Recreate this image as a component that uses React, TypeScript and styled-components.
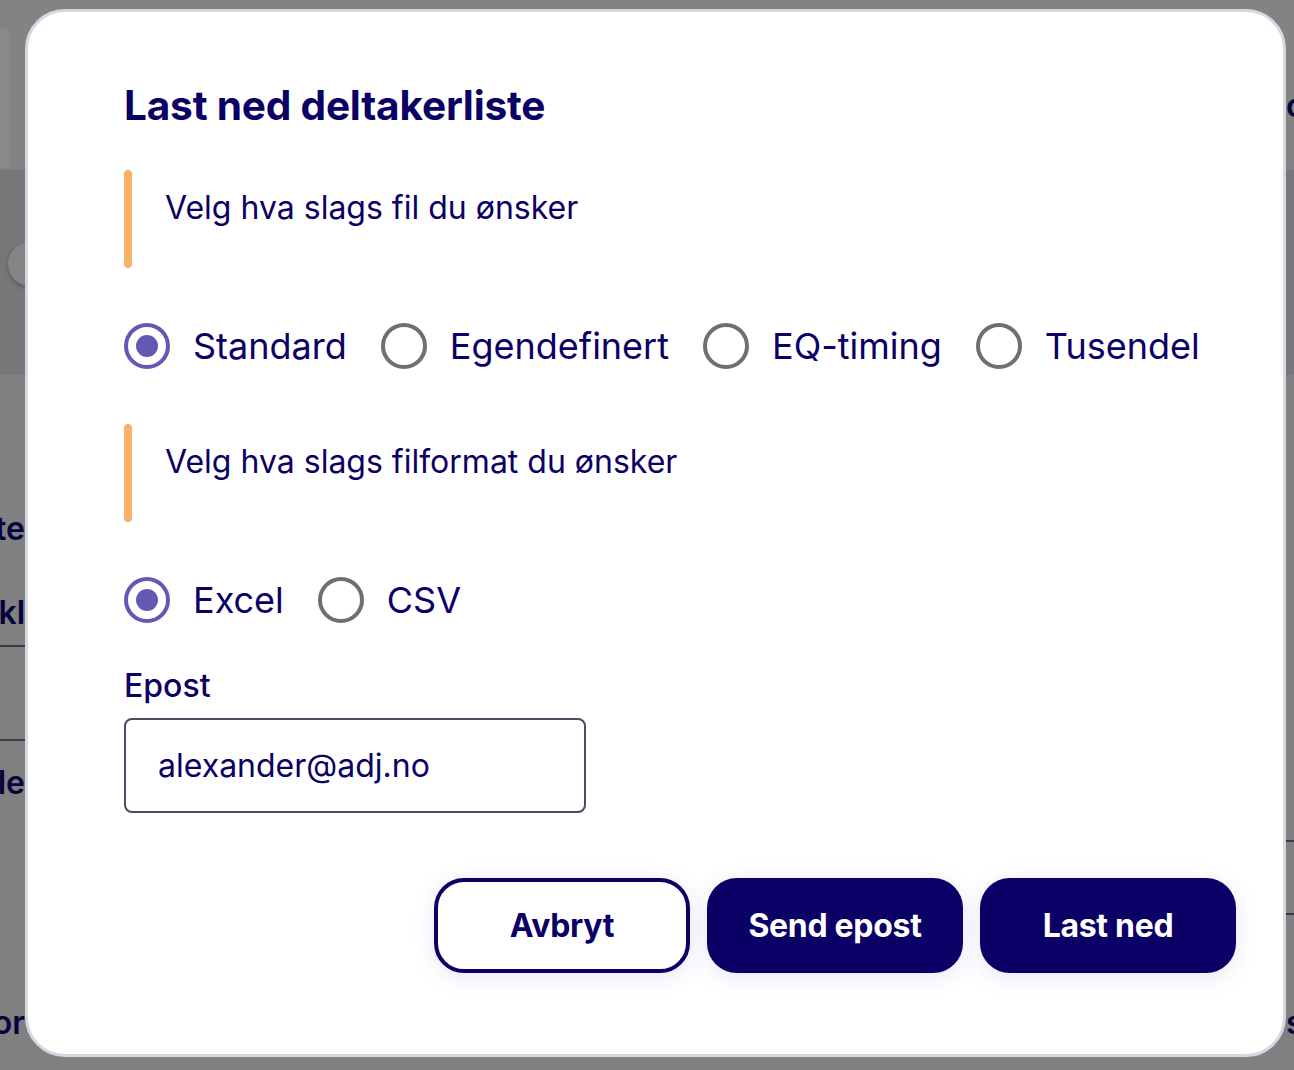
import React, { useState } from "react";
import styled, { createGlobalStyle } from "styled-components";

const GlobalStyle = createGlobalStyle`
  * { box-sizing: border-box; }
  html, body { margin: 0; padding: 0; }
  body {
    width: 1294px;
    height: 1070px;
    overflow: hidden;
    font-family: Inter, "Noto Sans", "Liberation Sans", sans-serif;
  }
`;

const NAVY = "#0b0066";

/* ---------- dimmed page behind the dialog ---------- */

const Page = styled.div`
  position: relative;
  width: 1294px;
  height: 1070px;
  background: #808080;
  display: grid;
  grid-template-columns: 25px 1fr 8px;
  grid-template-rows: 170px 205px 1fr;
  overflow: hidden;
`;

const Band = styled.div<{ $bg: string }>`
  grid-column: 1 / -1;
  background: ${(p) => p.$bg};
  display: grid;
  grid-template-columns: 25px 1fr 8px;
`;

const Edge = styled.div`
  display: flex;
  flex-direction: column;
  align-items: flex-start;
  overflow: hidden;
`;

const GhostCard = styled.div`
  margin-top: 28px;
  width: 10px;
  height: 140px;
  background: #898989;
  border-radius: 0 6px 0 0;
`;

const Knob = styled.div`
  margin: 72px 0 0 8px;
  width: 44px;
  height: 44px;
  flex: none;
  border-radius: 50%;
  background: #858585;
  box-shadow: 0 2px 4px rgba(0, 0, 0, 0.25);
`;

const LowerLeft = styled.div`
  grid-column: 1;
  display: flex;
  flex-direction: column;
  align-items: flex-end;
  overflow: hidden;
  padding-top: 136px;
`;

const Sliver = styled.div<{ $mt: number }>`
  margin-top: ${(p) => p.$mt}px;
  font-size: 32px;
  font-weight: 600;
  line-height: 36px;
  color: #06033d;
  white-space: nowrap;
`;

const Rule = styled.div<{ $mt: number }>`
  margin-top: ${(p) => p.$mt}px;
  width: 100%;
  height: 2px;
  flex: none;
  background: #3b3b47;
`;

const LowerRight = styled.div`
  grid-column: 3;
  display: flex;
  flex-direction: column;
  align-items: flex-start;
  overflow: hidden;
  padding-top: 465px;
`;

const TopRightGlyph = styled.div`
  margin-top: 88px;
  font-size: 32px;
  line-height: 36px;
  font-weight: 600;
  color: #06033d;
`;

/* ---------- dialog ---------- */

const Dialog = styled.div`
  position: absolute;
  left: 25px;
  top: 9px;
  width: 1261px;
  height: 1048px;
  background: #ffffff;
  border: 3px solid #d3d8e2;
  border-radius: 40px;
  padding: 72px 47px 0 96px;
  display: flex;
  flex-direction: column;
  color: ${NAVY};
`;

const Title = styled.h2`
  margin: 0;
  font-size: 40.6px;
  line-height: 44px;
  font-weight: 700;
  color: ${NAVY};
  letter-spacing: -0.2px;
`;

const Notice = styled.div<{ $mt: number }>`
  margin-top: ${(p) => p.$mt}px;
  display: flex;
  gap: 33px;
  height: 98px;
`;

const NoticeBar = styled.div`
  width: 8px;
  flex: none;
  border-radius: 4px;
  background: #f5b266;
`;

const NoticeText = styled.p`
  margin: 0;
  padding-top: 20px;
  font-size: 32px;
  line-height: 36px;
  color: ${NAVY};
`;

const RadioGroup = styled.div<{ $mt: number }>`
  margin-top: ${(p) => p.$mt}px;
  display: flex;
  align-items: center;
  gap: 34px;
  height: 46px;
`;

const RadioLabel = styled.label`
  display: flex;
  align-items: center;
  gap: 23px;
  cursor: pointer;
  font-size: 36px;
  line-height: 46px;
  color: ${NAVY};
`;

const RadioCircle = styled.span<{ $checked: boolean }>`
  width: 46px;
  height: 46px;
  flex: none;
  border-radius: 50%;
  border: 4px solid ${(p) => (p.$checked ? "#6259b4" : "#6f6f6f")};
  display: flex;
  align-items: center;
  justify-content: center;
  &::after {
    content: "";
    width: 22px;
    height: 22px;
    border-radius: 50%;
    background: ${(p) => (p.$checked ? "#6259b4" : "transparent")};
  }
`;

const FieldLabel = styled.label`
  margin-top: 43px;
  font-size: 32px;
  line-height: 40px;
  font-weight: 500;
  color: ${NAVY};
`;

const Input = styled.input`
  margin-top: 12px;
  width: 462px;
  height: 95px;
  border: 2px solid #4b4a5e;
  border-radius: 8px;
  padding: 0 32px;
  font-family: inherit;
  font-size: 32px;
  color: ${NAVY};
  outline: none;
  background: #fff;
`;

const Actions = styled.div`
  margin-top: 65px;
  display: flex;
  justify-content: flex-end;
  gap: 17px;
`;

const Button = styled.button<{ $variant: "outline" | "solid" }>`
  width: 256px;
  height: 95px;
  border-radius: 30px;
  font-family: inherit;
  font-size: 32px;
  font-weight: 700;
  letter-spacing: -0.3px;
  cursor: pointer;
  border: 4px solid ${NAVY};
  background: ${(p) => (p.$variant === "solid" ? NAVY : "#ffffff")};
  color: ${(p) => (p.$variant === "solid" ? "#ffffff" : NAVY)};
  box-shadow: 0 4px 22px rgba(90, 80, 200, 0.14);
`;

type Option = { id: string; label: string };

function Radios({
  options,
  value,
  onChange,
  name,
  mt,
}: {
  options: Option[];
  value: string;
  onChange: (v: string) => void;
  name: string;
  mt: number;
}) {
  return (
    <RadioGroup $mt={mt} role="radiogroup" aria-label={name}>
      {options.map((o) => (
        <RadioLabel key={o.id} onClick={() => onChange(o.id)}>
          <RadioCircle $checked={value === o.id} />
          {o.label}
        </RadioLabel>
      ))}
    </RadioGroup>
  );
}

export default function App() {
  const [kind, setKind] = useState("standard");
  const [format, setFormat] = useState("excel");
  const [email, setEmail] = useState("alexander@adj.no");

  return (
    <>
      <GlobalStyle />
      <Page>
        <Band $bg="#838383">
          <Edge>
            <GhostCard />
          </Edge>
          <div />
          <Edge>
            <TopRightGlyph>o</TopRightGlyph>
          </Edge>
        </Band>
        <Band $bg="#77777a">
          <Edge>
            <Knob />
          </Edge>
        </Band>
        <LowerLeft>
          <Sliver $mt={0}>Dette</Sliver>
          <Sliver $mt={48}>Deltakl</Sliver>
          <Rule $mt={14} />
          <Rule $mt={92} />
          <Sliver $mt={24}>Melle</Sliver>
          <Sliver $mt={204}>Sponsor</Sliver>
        </LowerLeft>
        <LowerRight>
          <Rule $mt={0} />
          <Rule $mt={71} />
          <Sliver $mt={90}>s</Sliver>
        </LowerRight>

        <Dialog role="dialog" aria-modal="true">
          <Title>Last ned deltakerliste</Title>
          <Notice $mt={42}>
            <NoticeBar />
            <NoticeText>Velg hva slags fil du ønsker</NoticeText>
          </Notice>
          <Radios
            name="type"
            mt={55}
            value={kind}
            onChange={setKind}
            options={[
              { id: "standard", label: "Standard" },
              { id: "custom", label: "Egendefinert" },
              { id: "eq", label: "EQ-timing" },
              { id: "tusendel", label: "Tusendel" },
            ]}
          />
          <Notice $mt={55}>
            <NoticeBar />
            <NoticeText>Velg hva slags filformat du ønsker</NoticeText>
          </Notice>
          <Radios
            name="format"
            mt={55}
            value={format}
            onChange={setFormat}
            options={[
              { id: "excel", label: "Excel" },
              { id: "csv", label: "CSV" },
            ]}
          />
          <FieldLabel htmlFor="epost">Epost</FieldLabel>
          <Input id="epost" value={email} onChange={(e) => setEmail(e.target.value)} />
          <Actions>
            <Button $variant="outline">Avbryt</Button>
            <Button $variant="solid">Send epost</Button>
            <Button $variant="solid">Last ned</Button>
          </Actions>
        </Dialog>
      </Page>
    </>
  );
}
